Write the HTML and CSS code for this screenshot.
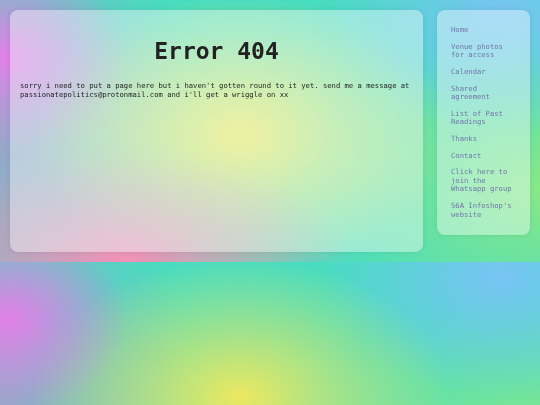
FILE: index.html
```html
<!DOCTYPE html>
<html lang="en">
<head>
<meta charset="utf-8">
<title>Error 404</title>
<link rel="stylesheet" href="styles.css">
</head>
<body>
<div class="layout">
  <main class="card main">
    <h1 class="title">Error 404</h1>
    <p class="message">sorry i need to put a page here but i haven't gotten round to it yet. send me a message at passionatepolitics@protonmail.com and i'll get a wriggle on xx</p>
  </main>
  <nav class="card side">
    <a class="link" href="#">Home</a>
    <a class="link" href="#">Venue photos for access</a>
    <a class="link" href="#">Calendar</a>
    <a class="link" href="#">Shared agreement</a>
    <a class="link" href="#">List of Past Readings</a>
    <a class="link" href="#">Thanks</a>
    <a class="link" href="#">Contact</a>
    <a class="link" href="#">Click here to join the Whatsapp group</a>
    <a class="link" href="#">56A Infoshop's website</a>
  </nav>
</div>
</body>
</html>
```
FILE: styles.css
```css
html {
  margin: 0;
  padding: 0;
}
body {
  margin: 0;
  padding: 0;
  font-family: "DejaVu Sans Mono", "Liberation Mono", monospace;
  background-color: #48dcc0;
  background-image:
    radial-gradient(ellipse 120px 95px at 8px 58px, rgba(226,128,232,1), rgba(226,128,232,0)),
    radial-gradient(ellipse 230px 110px at 125px 262px, rgba(246,144,184,1), rgba(246,144,184,0)),
    radial-gradient(ellipse 210px 140px at 240px 135px, rgba(236,232,96,1), rgba(236,232,96,0)),
    radial-gradient(ellipse 180px 120px at 500px 15px, rgba(120,196,244,1), rgba(120,196,244,0)),
    radial-gradient(ellipse 240px 160px at 540px 190px, rgba(136,232,136,1), rgba(136,232,136,0)),
    radial-gradient(ellipse 200px 260px at 0px 150px, rgba(150,168,200,1), rgba(150,168,200,0));
}
.layout {
  display: flex;
  align-items: flex-start;
  gap: 14px;
  padding: 10px;
}
.card {
  background: rgba(255, 255, 255, 0.4);
  backdrop-filter: blur(10px);
  border-radius: 8px;
  box-shadow: 0 0 6px rgba(0, 0, 0, 0.08);
  box-sizing: border-box;
}
.main {
  width: 413px;
  min-height: 242px;
  padding: 10px;
}
.title {
  margin: 18px 0 0;
  text-align: center;
  font-size: 23px;
  line-height: 27px;
  font-weight: bold;
  color: #222;
}
.message {
  margin: 17px 0 0;
  font-size: 7.2px;
  line-height: 8.5px;
  color: #1e1e1e;
}
.side {
  width: 93px;
  padding: 16px 14px;
  display: flex;
  flex-direction: column;
  gap: 8.2px;
}
.link {
  font-size: 7.2px;
  line-height: 8.5px;
  color: #7276a8;
  text-decoration: none;
}
```
